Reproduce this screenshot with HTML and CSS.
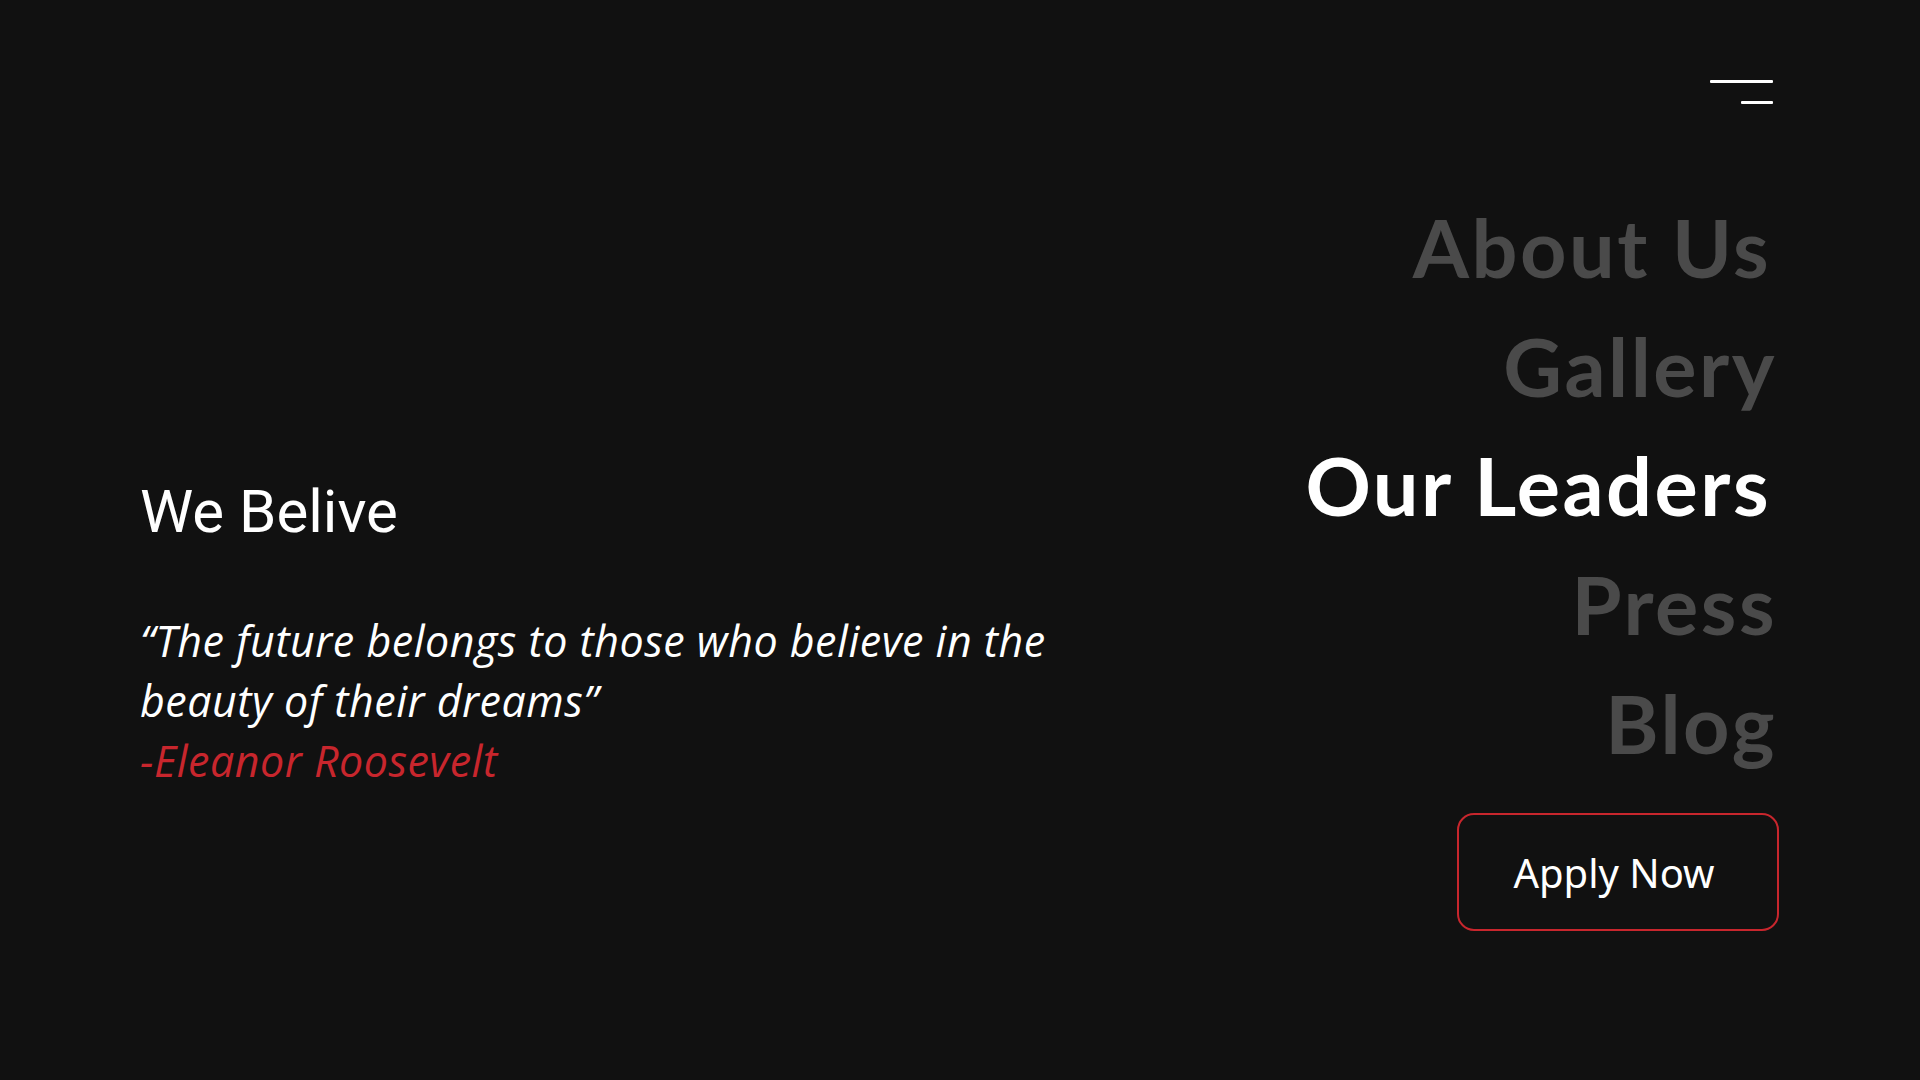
FILE: index.html
```html
<!DOCTYPE html>
<html lang="en">
<head>
<meta charset="utf-8">
<title>We Belive</title>
<link rel="stylesheet" href="styles.css">
</head>
<body>
<div class="page">
  <header class="header">
    <button class="menu-toggle" aria-label="Menu">
      <span class="bar bar-long"></span>
      <span class="bar bar-short"></span>
    </button>
  </header>
  <main class="main">
    <section class="belief">
      <h1 class="belief-title">We Belive</h1>
      <p class="quote">“The future belongs to those who believe in the<br>beauty of their dreams”<br><span class="author">-Eleanor Roosevelt</span></p>
    </section>
    <nav class="side-nav">
      <ul class="nav-list">
        <li class="nav-item nav-about"><a href="#">About Us</a></li>
        <li class="nav-item nav-gallery"><a href="#">Gallery</a></li>
        <li class="nav-item nav-leaders active"><a href="#">Our Leaders</a></li>
        <li class="nav-item nav-press"><a href="#">Press</a></li>
        <li class="nav-item nav-blog"><a href="#">Blog</a></li>
      </ul>
      <a class="apply-btn" href="#">Apply Now</a>
    </nav>
  </main>
</div>
</body>
</html>
```
FILE: styles.css
```css
html, body {
  margin: 0;
  padding: 0;
  background: #111111;
}
body {
  width: 1920px;
  height: 1080px;
  overflow: hidden;
}
.page {
  display: flex;
  flex-direction: column;
  padding: 0 141px 0 140px;
}
.header {
  display: flex;
  justify-content: flex-end;
  padding-top: 80px;
  padding-right: 6px;
}
.menu-toggle {
  display: flex;
  flex-direction: column;
  align-items: flex-end;
  gap: 18px;
  width: 63px;
  padding: 0;
  border: 0;
  background: none;
  cursor: pointer;
}
.bar {
  display: block;
  height: 3px;
  background: #ffffff;
  border-radius: 1px;
}
.bar-long { width: 63px; }
.bar-short { width: 32px; }

.main {
  display: flex;
  justify-content: space-between;
  align-items: flex-start;
  margin-top: 83px;
}
.belief {
  padding-top: 289px;
}
.belief-title {
  margin: 0;
  font-family: Roboto, "Liberation Sans", sans-serif;
  font-weight: 400;
  font-size: 60px;
  line-height: 72px;
  color: #ffffff;
}
.quote {
  margin: 63px 0 0;
  font-family: "Open Sans", "Noto Sans", sans-serif;
  font-style: italic;
  font-weight: 400;
  font-size: 43px;
  line-height: 60px;
  letter-spacing: 0.5px;
  color: #ffffff;
}
.author {
  color: #c8262d;
}
.side-nav {
  display: flex;
  flex-direction: column;
  align-items: flex-end;
}
.nav-list {
  list-style: none;
  margin: 0;
  padding: 0;
  text-align: right;
}
.nav-item {
  font-family: Lato, "Noto Sans", sans-serif;
  font-weight: 700;
  font-size: 81px;
  line-height: 119px;
  letter-spacing: 2.5px;
  padding-right: 2px;
}
.nav-item a {
  color: #4a4a4a;
  text-decoration: none;
}
.nav-item.active a {
  color: #ffffff;
}
.nav-about, .nav-leaders { padding-right: 8px; }
.apply-btn {
  display: flex;
  justify-content: center;
  align-items: center;
  box-sizing: border-box;
  width: 322px;
  height: 118px;
  margin-top: 31px;
  border: 2px solid #c8262d;
  border-radius: 17px;
  font-family: "Noto Sans", "Open Sans", sans-serif;
  font-size: 40px;
  color: #ffffff;
  text-decoration: none;
  padding-right: 8px;
}
```
